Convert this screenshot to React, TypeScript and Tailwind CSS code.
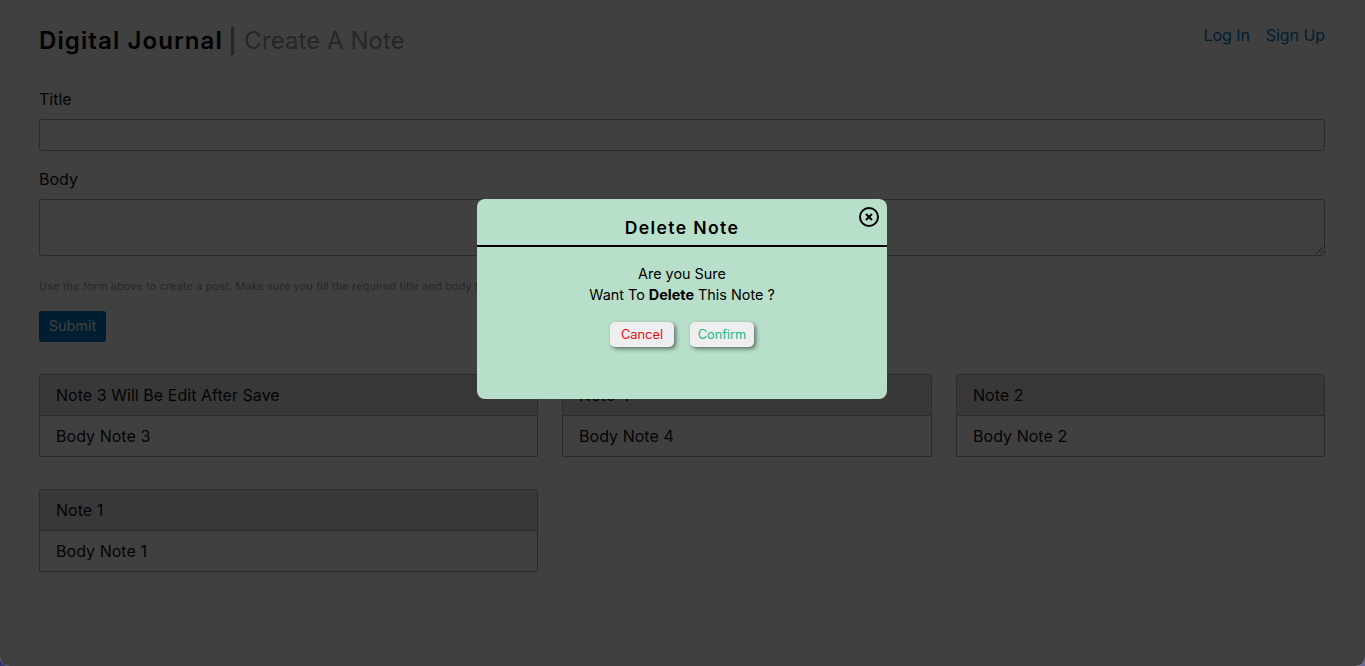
import React from "react";

type Note = { title: string; body: string };

const notes: Note[] = [
  { title: "Note 3 Will Be Edit After Save", body: "Body Note 3" },
  { title: "Note 4", body: "Body Note 4" },
  { title: "Note 2", body: "Body Note 2" },
  { title: "Note 1", body: "Body Note 1" },
];

function NoteCard({ title, body }: Note) {
  return (
    <article className="h-[83px] rounded-t-[3px] border border-[#aaa] tracking-[0.04px]">
      <h2 className="h-[41px] border-b border-[#aaa] bg-[#dfdfdf] px-4 leading-[41px]">{title}</h2>
      <p className="px-4 leading-[40px]">{body}</p>
    </article>
  );
}

function Header() {
  return (
    <header className="flex h-[89px] justify-between pt-[27px]">
      <div className="flex h-7 items-center text-[24px] leading-7">
        <h1 className="font-semibold tracking-[1.1px] text-black">Digital Journal</h1>
        <span className="ml-[8.5px] mr-[10px] h-7 w-[3px] bg-[#999]" />
        <span className="tracking-[0.06px] text-[#999]">Create A Note</span>
      </div>
      <nav className="-mt-[4px] flex gap-4 leading-6 text-[#0077c2]">
        <a href="#login" className="tracking-[-0.06px]">Log In</a>
        <a href="#signup" className="tracking-[-0.06px]">Sign Up</a>
      </nav>
    </header>
  );
}

function NoteForm() {
  return (
    <form className="flex flex-col items-start">
      <label className="h-[30px] leading-[20px]">Title</label>
      <input className="h-8 w-full rounded-[3px] border border-[#aaa] bg-transparent" />
      <label className="mt-[18px] h-[30px] leading-[20px]">Body</label>
      <textarea className="h-[57px] w-full resize-y rounded-[3px] border border-[#aaa] bg-transparent" />
      <p className="mt-[23px] text-[10.8px] leading-4 tracking-[0.2px] text-[#999]">
        Use the form above to create a post. Make sure you fill the required title and body fields.
      </p>
      <button
        type="button"
        className="mt-4 h-[31px] w-[67px] rounded-[3px] bg-[#0077c2] pb-px text-[14.4px] text-white"
      >
        Submit
      </button>
    </form>
  );
}

function DeleteDialog() {
  return (
    <section
      role="dialog"
      aria-label="Delete Note"
      className="relative mt-[199px] h-[200px] w-[410px] rounded-[8px] bg-[#b8dfca] text-center text-black"
    >
      <h2 className="h-12 border-b-2 border-black pt-[17px] text-[17.6px] font-semibold leading-6 tracking-[1.35px]">
        Delete Note
      </h2>
      <button type="button" aria-label="Close" className="absolute right-[8px] top-[8px] h-5 w-5">
        <svg viewBox="0 0 20 20" className="block h-5 w-5" fill="none" stroke="black" strokeWidth="2">
          <circle cx="10" cy="10" r="9" />
          <path d="M7 7l6 6M13 7l-6 6" />
        </svg>
      </button>
      <p className="pt-[16px] text-[14.4px] leading-[21px]">
        Are you Sure
        <br />
        Want To <strong className="font-bold">Delete</strong> This Note ?
      </p>
      <div className="mt-[17px] flex justify-center gap-4 pr-px text-[12.8px]">
        <button
          type="button"
          className="h-[25px] w-16 rounded-[5px] bg-[#eee] pl-px pt-px text-[#e60c1f] shadow-[2px_2px_4px_rgba(0,0,0,0.5)]"
        >
          Cancel
        </button>
        <button
          type="button"
          className="h-[25px] w-16 rounded-[5px] bg-[#eee] pl-px pt-px text-[#19ba7d] shadow-[2px_2px_4px_rgba(0,0,0,0.5)]"
        >
          Confirm
        </button>
      </div>
    </section>
  );
}

export default function App() {
  return (
    <div className="h-[666px] overflow-hidden bg-linear-to-r from-[#303468] to-[#6b6699] font-['Inter',sans-serif] text-[16px]">
      <div className="relative h-full overflow-hidden rounded-b-[9px] bg-white text-[#111]">
        <main className="pl-[39px] pr-[40px]">
          <Header />
          <NoteForm />
          <div className="mt-8 grid grid-cols-[499px_370px_369px] gap-x-6 gap-y-8">
            {notes.map((note) => (
              <NoteCard key={note.title} {...note} />
            ))}
          </div>
        </main>
        <div className="absolute inset-0 flex items-start justify-center bg-black/75 pr-px">
          <DeleteDialog />
        </div>
      </div>
    </div>
  );
}
